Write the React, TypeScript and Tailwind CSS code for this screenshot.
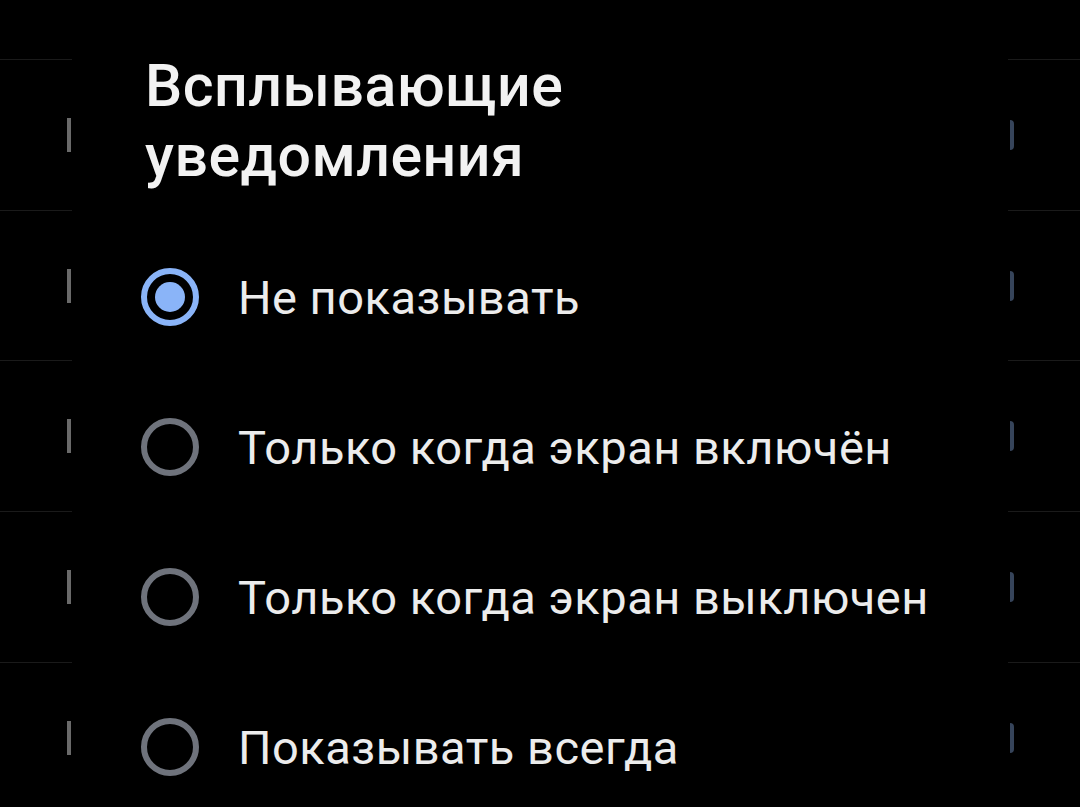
import { useState } from "react";

const options = [
  "Не показывать",
  "Только когда экран включён",
  "Только когда экран выключен",
  "Показывать всегда",
];

// faint list rows peeking out behind the dialog
function BackRow() {
  return (
    <div className="h-[150.7px] border-t border-[#1a1a1a] flex items-center justify-between pl-[67px] pr-[66px]">
      <div className="w-[4px] h-[34px] bg-[#6a6a6a]" />
      <div className="w-[4px] h-[30px] rounded-r-full bg-[#36445a]" />
    </div>
  );
}

export default function App() {
  const [selected, setSelected] = useState(0);

  return (
    <main
      className="relative w-[1080px] h-[807px] overflow-hidden bg-black"
      style={{ fontFamily: "Roboto, 'Noto Sans', sans-serif" }}
    >
      <div className="pt-[59px]">
        {[0, 1, 2, 3, 4].map((i) => (
          <BackRow key={i} />
        ))}
      </div>

      {/* dialog sheet over the list */}
      <div className="absolute left-[72px] top-0 w-[936px] h-full bg-black pl-[69px]">
        <h2 className="mt-[51px] pl-[4px] text-[59px] leading-[70px] font-medium tracking-[0.5px] text-[#f2f2f2]">
          Всплывающие
          <br />
          уведомления
        </h2>

        <div className="mt-[31px]">
          {options.map((label, i) => {
            const on = selected === i;
            return (
              <button
                key={label}
                onClick={() => setSelected(i)}
                className="h-[150px] w-full flex items-center gap-[39px] text-left"
              >
                <span
                  className={
                    on
                      ? "w-[58px] h-[58px] shrink-0 rounded-full border-[6px] border-[#8ab4f8] flex items-center justify-center"
                      : "w-[58px] h-[58px] shrink-0 rounded-full border-[6px] border-[#6f737c] flex items-center justify-center"
                  }
                >
                  {on && <span className="w-[30px] h-[30px] rounded-full bg-[#8ab4f8]" />}
                </span>
                <span className="text-[47px] leading-none tracking-[0.5px] text-[#ececec]">{label}</span>
              </button>
            );
          })}
        </div>
      </div>
    </main>
  );
}
